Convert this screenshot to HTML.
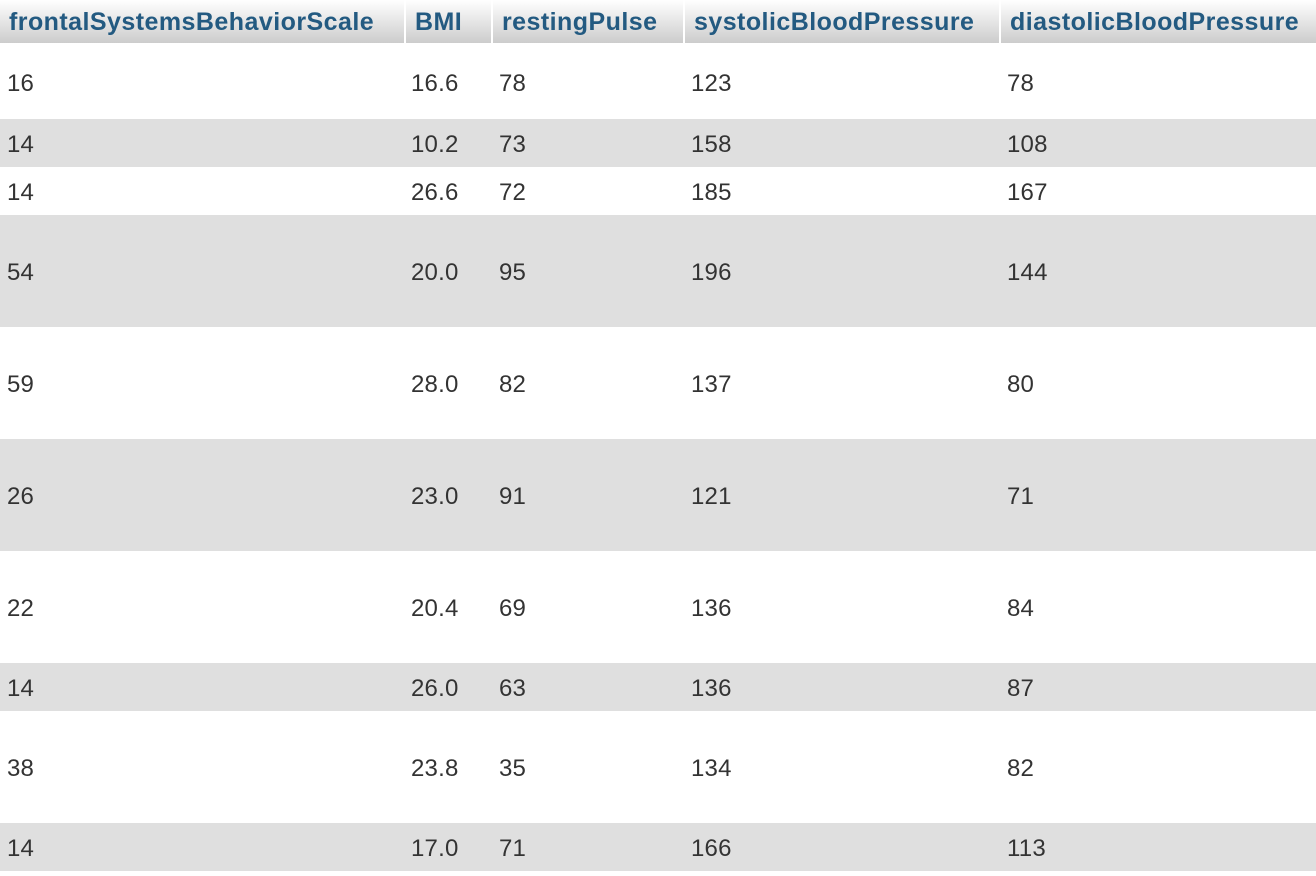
<!DOCTYPE html>
<html><head><style>
body{margin:0;width:1316px;height:876px;background:#fff;overflow:hidden;font-family:"Liberation Sans",Arial,sans-serif;position:relative}
.h{position:absolute;top:0;height:43px;background:linear-gradient(#fff,#ccc);color:#235a81;font-weight:bold;font-size:25px;letter-spacing:0.45px;line-height:45px;padding-left:9px;box-sizing:border-box;white-space:nowrap;overflow:hidden}
.r{position:absolute;left:0;width:1316px}
.g{background:#dfdfdf}
.c{position:absolute;top:2px;color:#333;font-size:24px;letter-spacing:0.2px;white-space:nowrap}
</style></head><body>
<div class="h" style="left:0;width:404px">frontalSystemsBehaviorScale</div>
<div class="h" style="left:406px;width:85px">BMI</div>
<div class="h" style="left:493px;width:190px">restingPulse</div>
<div class="h" style="left:685px;width:314px">systolicBloodPressure</div>
<div class="h" style="left:1001px;width:315px">diastolicBloodPressure</div>
<div id="rows"></div>
<script>
var rows=[[44,119,0,"16","16.6","78","123","78"],[119,167,1,"14","10.2","73","158","108"],[167,215,0,"14","26.6","72","185","167"],[215,327,1,"54","20.0","95","196","144"],[327,439,0,"59","28.0","82","137","80"],[439,551,1,"26","23.0","91","121","71"],[551,663,0,"22","20.4","69","136","84"],[663,711,1,"14","26.0","63","136","87"],[711,823,0,"38","23.8","35","134","82"],[823,871,1,"14","17.0","71","166","113"]];
var xs=[7,411,499,691,1007],h="";
rows.forEach(function(r){var ht=r[1]-r[0];h+='<div class="r'+(r[2]?' g':'')+'" style="top:'+r[0]+'px;height:'+ht+'px">';for(var i=0;i<5;i++)h+='<div class="c" style="left:'+xs[i]+'px;line-height:'+ht+'px">'+r[3+i]+'</div>';h+='</div>';});
document.getElementById('rows').innerHTML=h;
</script>
</body></html>
